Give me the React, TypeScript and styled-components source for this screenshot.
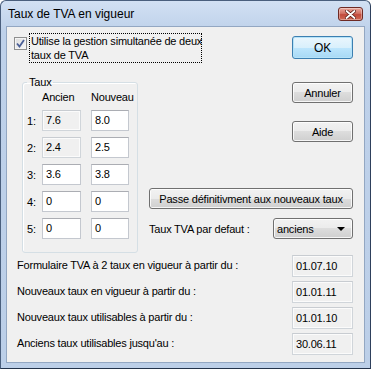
import { Fragment } from 'react';
import styled, { createGlobalStyle } from 'styled-components';

const GlobalStyle = createGlobalStyle`
    html, body {
        margin: 0;
        padding: 0;
        background: #ffffff;
    }
    body {
        font-family: "Liberation Sans", Arial, sans-serif;
        font-size: 11px;
        letter-spacing: -0.2px;
        color: #000;
    }
    * {
        box-sizing: border-box;
    }
`;

const Window = styled.div`
    width: 371px;
    height: 369px;
    display: flex;
    flex-direction: column;
    border: 1px solid #4a5f7d;
    border-bottom-color: #23334b;
    border-right-color: #2e405c;
    border-radius: 6px 6px 0 0;
    background: linear-gradient(#d2e0f3, #bed1ea 30px, #bccfe8);
    padding: 0 5px 5px 5px;
`;

const TitleBar = styled.div`
    height: 25px;
    display: flex;
    align-items: flex-start;
    justify-content: space-between;
    padding: 6px 2px 0 2px;
`;

const Title = styled.span`
    font-size: 12px;
    line-height: 14px;
    letter-spacing: 0;
    color: #000;
`;

const CloseButton = styled.div`
    width: 25px;
    height: 14px;
    border: 1px solid #6e2a24;
    border-radius: 3px;
    background: linear-gradient(#e9a89d, #d27163 45%, #c24a3c 55%, #d06a55);
    display: flex;
    align-items: center;
    justify-content: center;
    box-shadow: inset 0 0 0 1px rgba(255, 255, 255, 0.35);
`;

const Body = styled.div`
    flex: 1;
    display: flex;
    flex-direction: column;
    background: #f0f0f0;
    border: 1px solid #93a7c2;
    padding: 6px 11px 0 0;
`;

const TopRow = styled.div`
    display: flex;
    justify-content: space-between;
    align-items: flex-start;
    padding-left: 7px;
`;

const CheckRow = styled.div`
    display: flex;
    align-items: flex-start;
`;

const CheckBox = styled.div`
    width: 13px;
    height: 13px;
    margin-top: 4px;
    margin-right: 2px;
    border: 1px solid #8e8f8f;
    background: linear-gradient(135deg, #dcdcdc, #f8f8f8);
    box-shadow: inset 0 0 0 1px #f4f4f4;
    display: flex;
    align-items: center;
    justify-content: center;
`;

const CheckLabel = styled.div`
    width: 173px;
    height: 30px;
    border: 1px dotted #000;
    padding: 0 0 0 1px;
    line-height: 14px;
    white-space: nowrap;
`;

const Button = styled.div<{ $default?: boolean; $wide?: boolean }>`
    width: ${p => (p.$wide ? '204px' : '61px')};
    height: ${p => (p.$default ? '23px' : '21px')};
    display: flex;
    align-items: center;
    justify-content: center;
    border: 1px solid ${p => (p.$default ? '#3c7fb1' : '#707070')};
    border-radius: 3px;
    background: ${p => (p.$default
        ? 'linear-gradient(#eaf6fd, #d9f0fc 50%, #bee6fd 50%, #a7d9f5)'
        : 'linear-gradient(#f2f2f2, #ebebeb 50%, #dddddd 50%, #cfcfcf)')};
    box-shadow: inset 0 0 0 1px ${p => (p.$default ? '#b6e3f8' : 'rgba(255,255,255,0.8)')};
    font-size: ${p => (p.$default ? '12px' : '11px')};
    color: #000;
`;

const MidRow = styled.div`
    display: flex;
    margin-top: 13px;
`;

const GroupBox = styled.fieldset`
    width: 122px;
    height: 177px;
    margin: 0 0 0 15px;
    padding: 0;
    border: 1px solid #d5dfe5;
    border-radius: 3px;
    box-shadow: inset 1px 1px 0 #fff;
`;

const GroupLegend = styled.legend`
    margin-left: 4px;
    padding: 0 2px;
    line-height: 13px;
    font-size: 11px;
`;

const RateGrid = styled.div`
    display: grid;
    grid-template-columns: 15px 49px 38px;
    grid-template-rows: 13px repeat(5, 21px);
    row-gap: 6px;
    padding: 2px 0 0 4px;
`;

const ColHead = styled.div<{ $col: number }>`
    grid-column: ${p => p.$col};
    line-height: 13px;
`;

const RowLabel = styled.div`
    grid-column: 1;
    align-self: center;
    line-height: 13px;
    padding-top: 2px;
`;

const Field = styled.div<{ $readOnly?: boolean; $w?: number; $h?: number }>`
    width: ${p => p.$w ?? 38}px;
    height: ${p => p.$h ?? 21}px;
    border: 1px solid ${p => (p.$readOnly ? '#d0d5da' : '#c4c8cf')};
    border-top-color: ${p => (p.$readOnly ? '#c8ccd1' : '#abadb3')};
    background: ${p => (p.$readOnly ? '#f0f0f0' : '#ffffff')};
    box-shadow: ${p => (p.$readOnly ? 'inset 0 0 0 1px #fbfbfb' : 'none')};
    padding: ${p => ((p.$h ?? 21) > 21 ? '3px' : '2px')} 0 0 3px;
    line-height: 14px;
    white-space: nowrap;
`;

const SideColumn = styled.div`
    flex: 1;
    display: flex;
    flex-direction: column;
    align-items: flex-end;
    margin-left: 11px;
`;

const SideButton = styled(Button)<{ $top: number }>`
    margin-top: ${p => p.$top}px;
`;

const SelectRow = styled.div`
    width: 204px;
    margin-top: 9px;
    display: flex;
    justify-content: space-between;
    align-items: center;
`;

const Select = styled.div`
    width: 80px;
    height: 21px;
    display: flex;
    align-items: center;
    justify-content: space-between;
    padding: 0 7px 0 3px;
    border: 1px solid #707070;
    border-radius: 3px;
    background: linear-gradient(#f2f2f2, #ebebeb 50%, #dddddd 50%, #cfcfcf);
    box-shadow: inset 0 0 0 1px rgba(255,255,255,0.8);
`;

const Arrow = styled.div`
    width: 0;
    height: 0;
    border-left: 4px solid transparent;
    border-right: 4px solid transparent;
    border-top: 4px solid #000;
    margin-top: 1px;
`;

const InfoList = styled.div`
    display: flex;
    flex-direction: column;
    gap: 4px;
    margin-top: 2px;
    padding-left: 10px;
`;

const InfoRow = styled.div`
    display: flex;
    justify-content: space-between;
    align-items: center;
`;

const InfoLabel = styled.span`
    line-height: 13px;
    margin-top: -1px;
`;

const rates = [
    { n: '1:', old: '7.6', neu: '8.0', locked: true },
    { n: '2:', old: '2.4', neu: '2.5', locked: true },
    { n: '3:', old: '3.6', neu: '3.8', locked: false },
    { n: '4:', old: '0', neu: '0', locked: false },
    { n: '5:', old: '0', neu: '0', locked: false },
];

const infos = [
    { label: 'Formulaire TVA à 2 taux en vigueur à partir du :', value: '01.07.10' },
    { label: 'Nouveaux taux en vigueur à partir du :', value: '01.01.11' },
    { label: 'Nouveaux taux utilisables à partir du :', value: '01.01.10' },
    { label: "Anciens taux utilisables jusqu'au :", value: '30.06.11' },
];

export default function App() {
    return (
        <>
            <GlobalStyle />
            <Window>
                <TitleBar>
                    <Title>Taux de TVA en vigueur</Title>
                    <CloseButton>
                        <svg width="11" height="9" viewBox="0 0 11 9">
                            <path d="M1.5 1 L9.5 8 M9.5 1 L1.5 8" stroke="#5a1c16" strokeWidth="3.4" strokeLinecap="round" />
                            <path d="M1.5 1 L9.5 8 M9.5 1 L1.5 8" stroke="#ffffff" strokeWidth="1.8" strokeLinecap="round" />
                        </svg>
                    </CloseButton>
                </TitleBar>
                <Body>
                    <TopRow>
                        <CheckRow>
                            <CheckBox>
                                <svg width="9" height="9" viewBox="0 0 9 9">
                                    <path d="M1 4.5 L3.5 7.5 L8 1" fill="none" stroke="#4a5f97" strokeWidth="1.8" />
                                </svg>
                            </CheckBox>
                            <CheckLabel>
                                Utilise la gestion simultanée de deux<br />taux de TVA
                            </CheckLabel>
                        </CheckRow>
                        <Button $default style={{ marginTop: 3 }}>OK</Button>
                    </TopRow>
                    <MidRow>
                        <GroupBox>
                            <GroupLegend>Taux</GroupLegend>
                            <RateGrid>
                                <ColHead $col={2}>Ancien</ColHead>
                                <ColHead $col={3}>Nouveau</ColHead>
                                {rates.map(r => (
                                    <Fragment key={r.n}>
                                        <RowLabel>{r.n}</RowLabel>
                                        <Field $w={39} $readOnly={r.locked}>{r.old}</Field>
                                        <Field $w={38}>{r.neu}</Field>
                                    </Fragment>
                                ))}
                            </RateGrid>
                        </GroupBox>
                        <SideColumn>
                            <SideButton $top={6}>Annuler</SideButton>
                            <SideButton $top={18}>Aide</SideButton>
                            <SideButton $top={46} $wide>Passe définitivment aux nouveaux taux</SideButton>
                            <SelectRow>
                                <span>Taux TVA par defaut :</span>
                                <Select>
                                    <span>anciens</span>
                                    <Arrow />
                                </Select>
                            </SelectRow>
                        </SideColumn>
                    </MidRow>
                    <InfoList>
                        {infos.map(i => (
                            <InfoRow key={i.label}>
                                <InfoLabel>{i.label}</InfoLabel>
                                <Field $readOnly $w={61} $h={22}>{i.value}</Field>
                            </InfoRow>
                        ))}
                    </InfoList>
                </Body>
            </Window>
        </>
    );
}
